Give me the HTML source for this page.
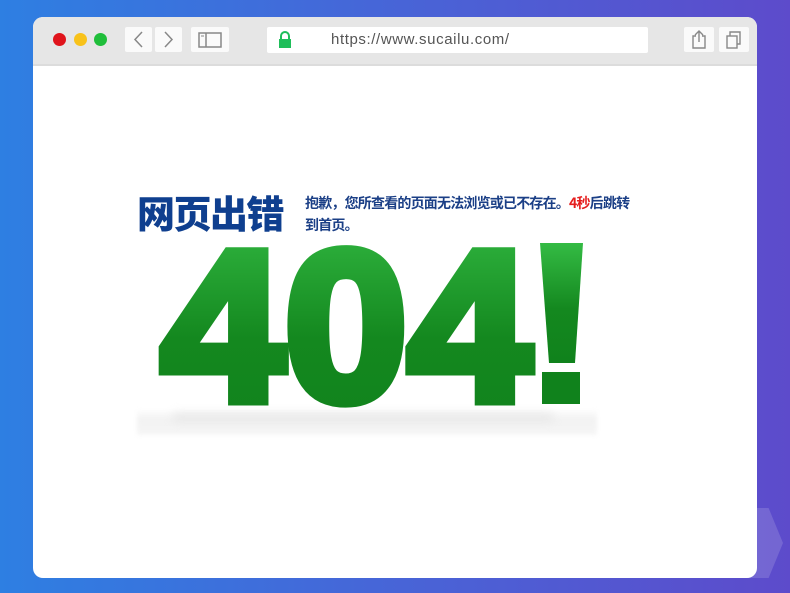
<!DOCTYPE html>
<html><head><meta charset="utf-8"><style>
html,body{margin:0;padding:0;}
body{width:790px;height:593px;overflow:hidden;position:relative;background:linear-gradient(90deg,#2e7fe2 0%,#4a62d6 55%,#5d4bcb 100%);font-family:"Liberation Sans","Noto Sans CJK SC",sans-serif;}
.hex{position:absolute;left:735px;top:508px;width:48px;height:70px;background:rgba(255,255,255,0.15);clip-path:polygon(0 0,70% 0,100% 50%,70% 100%,0 100%);}
.win{position:absolute;left:33px;top:17px;width:724px;height:561px;background:#fff;border-radius:10px;overflow:hidden;}
.bar{position:absolute;left:0;top:0;width:724px;height:47px;background:#e6e6e6;border-bottom:2px solid #dcdcdc;}
.dot{position:absolute;top:16px;width:13px;height:13px;border-radius:50%;}
.btn{position:absolute;top:10px;height:25px;background:#fafafa;border-radius:2px;}
.url{position:absolute;left:234px;top:10px;width:381px;height:26px;background:#fff;border-radius:2px;}
.url span{position:absolute;left:64px;top:4px;font-size:15px;color:#555;letter-spacing:0.6px;}
</style></head><body>
<div class="hex"></div>
<div class="win">
 <div class="bar">
  <div class="dot" style="left:20px;background:#e0141c"></div>
  <div class="dot" style="left:41px;background:#f8c21a"></div>
  <div class="dot" style="left:61px;background:#1fbe3a"></div>
  <div class="btn" style="left:92px;width:27px"><svg width="27" height="25"><path d="M17 5 L10 12.5 L17 20" stroke="#888" stroke-width="1.5" fill="none"/></svg></div>
  <div class="btn" style="left:122px;width:27px"><svg width="27" height="25"><path d="M10 5 L17 12.5 L10 20" stroke="#888" stroke-width="1.5" fill="none"/></svg></div>
  <div class="btn" style="left:158px;width:38px"><svg width="38" height="25"><rect x="8" y="6" width="22" height="14" stroke="#888" stroke-width="1.5" fill="none"/><line x1="15" y1="6" x2="15" y2="20" stroke="#888" stroke-width="1.5"/><line x1="10" y1="9" x2="13" y2="9" stroke="#888"/></svg></div>
  <div class="url"><svg style="position:absolute;left:10px;top:4px" width="16" height="18"><path d="M4 8 V5 a4 4 0 0 1 8 0 V8" stroke="#1fbe5a" stroke-width="2" fill="none"/><rect x="2" y="8" width="12" height="9" fill="#1fbe5a"/></svg><span>https://www.sucailu.com/</span></div>
  <div class="btn" style="left:651px;width:30px"><svg width="30" height="25"><path d="M12 9 H9 V21 H21 V9 H18 M15 15 V4 M11 8 L15 4 L19 8" stroke="#888" stroke-width="1.4" fill="none"/></svg></div>
  <div class="btn" style="left:686px;width:30px"><svg width="30" height="25"><rect x="8" y="9" width="10" height="12" stroke="#888" stroke-width="1.4" fill="none"/><path d="M11 9 V5 H21 V17 H18" stroke="#888" stroke-width="1.4" fill="none"/></svg></div>
 </div>
 <div style="position:absolute;left:104px;top:172px;font-size:38px;font-weight:900;color:#0f3f8f;letter-spacing:-1.5px;line-height:46px;font-family:'Noto Sans CJK SC',sans-serif">网页出错</div>
 <div style="position:absolute;left:272px;top:175px;white-space:nowrap;font-size:14px;font-weight:bold;color:#1b3f86;line-height:22px;font-family:'Noto Sans CJK SC',sans-serif;letter-spacing:-0.8px">抱歉，您所查看的页面无法浏览或已不存在。<span style="color:#e51d1d">4秒</span>后跳转<br>到首页。</div>
 <div style="position:absolute;left:104px;top:392px;width:460px;height:26px;background:linear-gradient(180deg,#fff,#f2f2f2 40%,#f6f6f6);filter:blur(2px)"></div>
 <div style="position:absolute;left:140px;top:396px;width:380px;height:8px;background:#ddd;filter:blur(5px);opacity:.6"></div>
</div>
<svg style="position:absolute;left:0;top:0" width="790" height="593">
 <defs><linearGradient id="g" x1="0" y1="0" x2="0" y2="1"><stop offset="0" stop-color="#34bb44"/><stop offset="0.55" stop-color="#14881f"/><stop offset="1" stop-color="#10821c"/></linearGradient></defs>
 <text x="161" y="400" font-family="Liberation Sans" font-weight="bold" font-size="214" fill="url(#g)" stroke="url(#g)" stroke-width="11" stroke-linejoin="miter" textLength="370" lengthAdjust="spacingAndGlyphs">404</text>
 <path d="M540 243 H583 L575 363 H549 Z" fill="url(#g)"/>
 <rect x="542" y="372" width="38" height="32" fill="#10821c"/>
</svg>
</body></html>
